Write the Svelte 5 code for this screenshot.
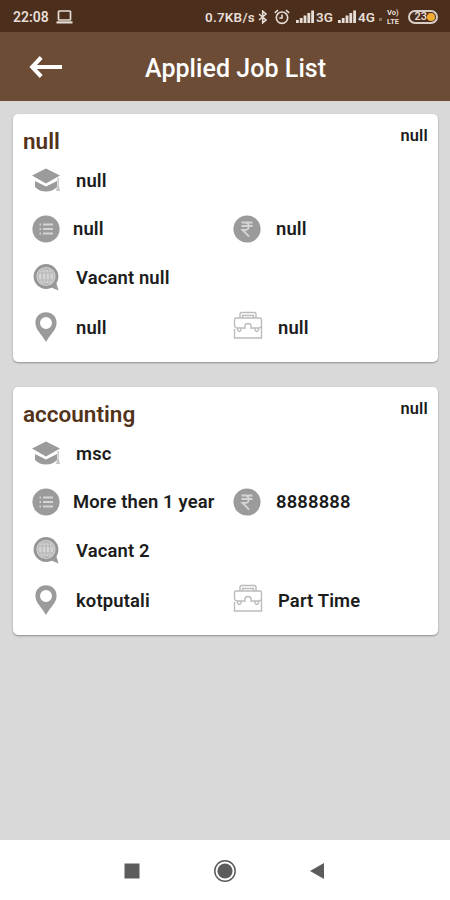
<script lang="ts">
	interface Job {
		title: string;
		date: string;
		education: string;
		experience: string;
		salary: string;
		vacancy: string;
		location: string;
		type: string;
	}

	let jobs: Job[] = [
		{
			title: 'null',
			date: 'null',
			education: 'null',
			experience: 'null',
			salary: 'null',
			vacancy: 'null',
			location: 'null',
			type: 'null'
		},
		{
			title: 'accounting',
			date: 'null',
			education: 'msc',
			experience: 'More then 1 year',
			salary: '8888888',
			vacancy: '2',
			location: 'kotputali',
			type: 'Part Time'
		}
	];
</script>

{#snippet signal()}
	<svg class="signal" width="18" height="13" viewBox="0 0 18 13" fill="currentColor">
		<rect x="0" y="10" width="2.8" height="3" />
		<rect x="3.8" y="8" width="2.8" height="5" />
		<rect x="7.6" y="5.5" width="2.8" height="7.5" />
		<rect x="11.4" y="3" width="2.8" height="10" />
		<rect x="15.2" y="0.5" width="2.8" height="12.5" />
	</svg>
{/snippet}

<div class="screen">
	<div class="status-bar">
		<span class="clock">22:08</span>
		<svg class="laptop" width="17" height="14" viewBox="0 0 17 14" fill="none" stroke="currentColor">
			<rect x="2.5" y="1" width="12" height="9" rx="0.8" stroke-width="1.7" />
			<path d="M0.5 12.4H16.5" stroke-width="2.2" />
		</svg>
		<span class="speed">0.7KB/s</span>
		<svg class="bluetooth" width="10" height="14" viewBox="0 0 10 14" fill="none" stroke="currentColor" stroke-width="1.6">
			<path d="M1 4L8 10L4.7 12.8V1.2L8 4L1 10" />
		</svg>
		<svg class="alarm" width="16" height="16" viewBox="0 0 16 16" fill="none" stroke="currentColor" stroke-width="1.6">
			<circle cx="8" cy="8.7" r="5.7" />
			<path d="M8 5.5V9H5.3M0.8 3.8L4 1.2M15.2 3.8L12 1.2" />
		</svg>
		{@render signal()}
		<span class="network">3G</span>
		{@render signal()}
		<span class="network">4G</span>
		<span class="dot"></span>
		<span class="volte"><span>Vo)</span><span>LTE</span></span>
		<span class="battery"><span class="level">23</span><i></i></span>
	</div>

	<header class="app-bar">
		<svg class="back" width="34" height="24" viewBox="0 0 34 24" fill="none" stroke="currentColor" stroke-width="4">
			<path d="M34 12H5M13.2 2.5L4.2 12L13.2 21.5" />
		</svg>
		<h1>Applied Job List</h1>
	</header>

	<main>
		{#each jobs as job}
			<article class="card">
				<div class="card-head">
					<h2>{job.title}</h2>
					<span class="date">{job.date}</span>
				</div>

				<div class="row">
					<div class="cell">
						<svg width="30" height="30" viewBox="0 0 30 30">
							<path class="fill" d="M15 3.5L29 10.5L15 18.5L1 10.5Z" />
							<path class="fill" d="M4 16L15 21.5L26 16V22Q21.5 26.5 15 26.5Q8.5 26.5 4 22Z" />
							<path class="fill light" d="M26.4 13H27.8V21L29 26H25L26.4 21Z" />
						</svg>
						<span>{job.education}</span>
					</div>
				</div>

				<div class="row experience">
					<div class="cell">
						<svg width="30" height="30" viewBox="0 0 30 30">
							<circle class="fill" cx="15" cy="15" r="13.6" />
							<path class="mark" d="M12 10.5H22M12 15H22M12 19.5H22M8.5 10.5H10M8.5 15H10M8.5 19.5H10" />
						</svg>
						<span>{job.experience}</span>
					</div>
					<div class="cell salary">
						<svg width="30" height="30" viewBox="0 0 30 30">
							<circle class="fill" cx="15" cy="15" r="13.6" />
							<path class="mark rupee" d="M9.5 8.5H20.5M9.5 12H20.5M10 8.5H13C18 8.5 18 16 13 16H10.5L17 22.5" />
						</svg>
						<span>{job.salary}</span>
					</div>
				</div>

				<div class="row vacancy">
					<div class="cell">
						<svg width="30" height="30" viewBox="0 0 30 30">
							<path class="fill" d="M19 25L27.5 28.5L25 20Z" />
							<circle class="globe" cx="15" cy="14.5" r="11" />
							<path class="lines" d="M8 11H22M8 18H22M15 6.5V22.5" />
							<ellipse class="lines" cx="15" cy="14.5" rx="4" ry="8" />
							<circle class="lines" cx="15" cy="14.5" r="8" />
						</svg>
						<span>Vacant {job.vacancy}</span>
					</div>
				</div>

				<div class="row location">
					<div class="cell">
						<svg width="30" height="30" viewBox="0 0 30 30">
							<path
								class="fill"
								fill-rule="evenodd"
								d="M15 0.3C8.8 0.3 4.4 4.8 4.4 10.8C4.4 18 10.5 22 15 30C19.5 22 25.6 18 25.6 10.8C25.6 4.8 21.2 0.3 15 0.3ZM15 5A6 6 0 1 1 15 17A6 6 0 1 1 15 5Z"
							/>
						</svg>
						<span>{job.location}</span>
					</div>
					<div class="cell type">
						<svg width="30" height="30" viewBox="0 0 30 30">
							<path
								class="case"
								d="M7 7V3Q7 1.5 8.5 1.5H21.5Q23 1.5 23 3V7M9.5 7V4.5H20.5V7M1.5 14V8.5Q1.5 7 3 7H27Q28.5 7 28.5 8.5V14Q28.5 17 25 17H18.5M11.5 17H5Q1.5 17 1.5 14M12 18V15Q12 12.5 15 12.5Q18 12.5 18 15V18M4.5 17V19Q6.3 22 8 19V17M22 17V19Q23.8 22 25.5 19V17M1.5 18V27H28.5V14"
							/>
						</svg>
						<span>{job.type}</span>
					</div>
				</div>
			</article>
		{/each}
	</main>

	<nav>
		<svg width="16" height="16" viewBox="0 0 16 16"><rect x="0.5" y="0.5" width="15" height="15" /></svg>
		<svg width="24" height="24" viewBox="0 0 24 24">
			<circle cx="12" cy="12" r="10.2" class="ring" />
			<circle cx="12" cy="12" r="7.6" />
		</svg>
		<svg width="16" height="18" viewBox="0 0 16 18"><path d="M15 1V17L1 9Z" /></svg>
	</nav>
</div>

<style>
	:global(body) {
		margin: 0;
	}

	.screen {
		display: flex;
		flex-direction: column;
		width: 450px;
		height: 900px;
		overflow: hidden;
		background: #d9d9d9;
		font-family: Roboto, sans-serif;
		font-weight: 600;
		color: #1c1c1c;
	}

	svg {
		display: block;
		flex: none;
	}

	.status-bar {
		display: flex;
		align-items: center;
		box-sizing: border-box;
		height: 32px;
		padding: 1px 12px 0 13px;
		background: #4b2e1b;
		color: #e6ddd6;
		font-size: 13.5px;
		white-space: nowrap;
	}

	.clock {
		width: 43px;
		font-size: 14px;
	}

	.speed {
		width: 51px;
		margin-left: auto;
		letter-spacing: 0.2px;
	}

	.bluetooth {
		margin-left: 2px;
		margin-right: 6px;
	}

	.alarm {
		margin-right: 6px;
	}

	.signal {
		margin-right: 2px;
	}

	.network {
		width: 22px;
	}

	.dot {
		width: 3px;
		height: 3px;
		margin: 5px 5px 0 -1px;
		background: #86705f;
	}

	.volte {
		display: flex;
		flex-direction: column;
		width: 15px;
		margin-right: 6px;
		font-size: 7.5px;
		line-height: 9px;
		font-weight: 700;
	}

	.battery {
		display: flex;
		align-items: center;
		justify-content: flex-end;
		box-sizing: border-box;
		width: 30px;
		height: 14px;
		padding-right: 1px;
		border: 2px solid #d9cec5;
		border-radius: 7px;
		font-size: 11px;
	}

	.battery i {
		width: 8px;
		height: 8px;
		border-radius: 50%;
		background: #f2ad35;
	}

	.app-bar {
		display: flex;
		align-items: center;
		box-sizing: border-box;
		height: 69px;
		padding: 1px 28px 0;
		background: #6d4c35;
		color: #fff;
	}

	h1 {
		margin: 2px 0 0 83px;
		font-size: 25px;
		font-weight: 500;
		letter-spacing: 0.05px;
	}

	main {
		display: flex;
		flex: 1;
		flex-direction: column;
		gap: 25px;
		padding: 13px 12px 0 13px;
	}

	.card {
		box-sizing: border-box;
		height: 248px;
		padding: 12px 10px 0;
		border-radius: 5px;
		background: #fff;
		box-shadow: 0 1px 2px rgba(0, 0, 0, 0.35);
	}

	.card-head {
		display: flex;
		justify-content: space-between;
		height: 30px;
	}

	h2 {
		margin: 0;
		color: #53321a;
		font-size: 22.5px;
		line-height: 30px;
		font-weight: 600;
	}

	.date {
		font-size: 16.4px;
		line-height: 20px;
		letter-spacing: 0.2px;
	}

	.row {
		display: grid;
		grid-template-columns: 201px 1fr;
		align-items: center;
		height: 49px;
		margin-left: 8px;
	}

	.row:nth-child(2) {
		height: 48px;
	}

	.vacancy {
		height: 48px;
	}

	.location {
		height: 52px;
	}

	.cell {
		display: flex;
		align-items: center;
		gap: 15px;
		font-size: 18.4px;
		letter-spacing: 0.15px;
		white-space: nowrap;
	}

	.experience .cell:first-child {
		gap: 12px;
	}

	.experience .salary {
		gap: 14px;
	}

	.type {
		gap: 15px;
		margin-left: 1px;
	}

	.type svg {
		margin-top: -2px;
	}

	.fill {
		fill: #9b9b9b;
	}

	.light {
		fill: #c4c4c4;
	}

	.mark {
		fill: none;
		stroke: #d4d4d4;
		stroke-width: 1.8;
	}

	.globe {
		fill: #d4d4d4;
		stroke: #969696;
		stroke-width: 2.8;
	}

	.lines {
		fill: none;
		stroke: #b2b2b2;
		stroke-width: 1;
	}

	.case {
		fill: none;
		stroke: #bcbcbc;
		stroke-width: 1.4;
	}

	nav {
		display: flex;
		align-items: center;
		justify-content: space-between;
		box-sizing: border-box;
		height: 60px;
		padding: 2px 125px 0 124px;
		background: #fff;
	}

	nav svg {
		fill: #5c5c5c;
	}

	.ring {
		fill: none;
		stroke: #5c5c5c;
		stroke-width: 1.5;
	}
</style>
